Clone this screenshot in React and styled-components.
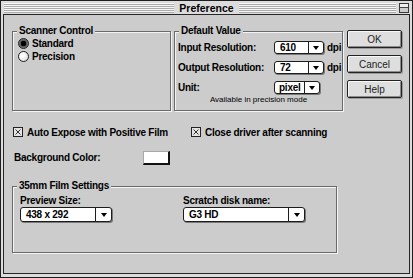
import React from "react"
import styled, { createGlobalStyle } from "styled-components"

const GlobalStyle = createGlobalStyle`
  html, body {
    margin: 0;
    padding: 0;
    background: #ffffff;
  }
  body {
    font-family: "Liberation Sans", Arial, sans-serif;
    color: #000;
  }
`

const Window = styled.div`
  box-sizing: border-box;
  width: 413px;
  height: 278px;
  border: 1px solid #1e1e1e;
  background: #dcdcdc;
  padding: 0 2px 3px 2px;
  display: flex;
  flex-direction: column;
`

const TitleBar = styled.div`
  height: 13px;
  display: grid;
  grid-template-columns: 1fr auto 1fr;
  align-items: center;
`

const Stripes = styled.div`
  height: 10px;
  margin: 0 1px;
  flex: 1;
  background: repeating-linear-gradient(
    to bottom,
    #f6f6f6 0 1px,
    #ababab 1px 2px
  );
`

const TitleSide = styled.div`
  display: flex;
  align-items: center;
`

const Title = styled.div`
  font-weight: 700;
  font-size: 10.5px;
  line-height: 12px;
  padding: 0 4px;
`

const CollapseBox = styled.div`
  box-sizing: border-box;
  width: 10px;
  height: 10px;
  margin: 0 1px 0 2px;
  border: 1px solid #3a3a3a;
  background: linear-gradient(to bottom, #eee 0 3px, #444 3px 4px, #ccc 4px);
`

const Content = styled.div`
  box-sizing: border-box;
  flex: 1;
  border: 1px solid #262626;
  background: #cccccc;
  padding: 16px 0 0 8px;
  display: flex;
  flex-direction: column;
  align-items: flex-start;
  letter-spacing: -0.25px;
`

const TopRow = styled.div`
  display: flex;
  align-items: flex-start;
`

const GroupBox = styled.div`
  box-sizing: border-box;
  width: ${(p) => p.$w}px;
  height: ${(p) => p.$h}px;
  margin-left: ${(p) => p.$ml || 0}px;
  margin-top: ${(p) => p.$mt || 0}px;
  border: 1px solid #6a6a6a;
  box-shadow: 1px 1px 0 #f4f4f4, inset 1px 1px 0 #f4f4f4;
  display: flex;
  flex-direction: column;
  align-items: flex-start;
`

const GroupTitle = styled.div`
  margin: -7px 0 0 4px;
  padding: 0 2px;
  background: #cccccc;
  font-weight: 700;
  font-size: 10px;
  line-height: 12px;
`

const RadioRow = styled.label`
  display: flex;
  align-items: center;
  gap: 3px;
  height: 13px;
  padding-left: 5px;
  font-weight: 700;
  font-size: 10px;
`

const RadioDot = styled.span`
  box-sizing: border-box;
  width: 11px;
  height: 11px;
  border-radius: 50%;
  border: 1px solid #1c1c1c;
  background: ${(p) =>
    p.$on
      ? "radial-gradient(circle, #000 0 2.6px, #555 3px, #888 5px)"
      : "radial-gradient(circle at 35% 35%, #ffffff 0 2px, #e6e6e6 5px)"};
`

const ValueGrid = styled.div`
  display: grid;
  grid-template-columns: 96px auto auto;
  grid-auto-rows: 20px;
  align-items: center;
  padding-left: 3px;
  font-weight: 700;
  font-size: 10px;
`

const Unit = styled.span`
  padding-left: 3px;
`

const Note = styled.div`
  align-self: stretch;
  text-align: center;
  font-size: 8px;
  line-height: 8px;
  margin-top: -1px;
  letter-spacing: 0;
`

const Popup = styled.div`
  box-sizing: border-box;
  display: flex;
  width: ${(p) => p.$w}px;
  height: ${(p) => p.$h || 13}px;
  background: #fff;
  border: 1px solid #1c1c1c;
  border-radius: 3px;
  box-shadow: 1px 1px 0 #7a7a7a;
  font-weight: 700;
  font-size: 10px;
`

const PopupValue = styled.span`
  flex: 1;
  display: flex;
  align-items: center;
  padding-left: ${(p) => p.$pad || 5}px;
  white-space: nowrap;
`

const PopupArrow = styled.span`
  width: ${(p) => p.$w || 14}px;
  flex: none;
  border-left: 1px solid #1c1c1c;
  display: flex;
  align-items: center;
  justify-content: center;

  &::after {
    content: "";
    border-left: 3.5px solid transparent;
    border-right: 3.5px solid transparent;
    border-top: 4px solid #000;
    margin-top: 1px;
  }
`

const ButtonColumn = styled.div`
  display: flex;
  flex-direction: column;
  gap: 7px;
  margin: -1px 0 0 4px;
`

const Button = styled.button`
  box-sizing: border-box;
  width: 55px;
  height: 18px;
  padding: 0;
  border: 1px solid #222;
  border-radius: 2px;
  background: #dedede;
  box-shadow: inset 1px 1px 0 #f8f8f8, inset -1px -1px 0 #8c8c8c,
    1px 1px 0 #9a9a9a;
  font-family: "Liberation Sans", Arial, sans-serif;
  font-size: 10px;
  color: #222;
`

const CheckRow = styled.div`
  display: flex;
  align-items: center;
  height: 14px;
  margin-top: 14px;
`

const CheckItem = styled.label`
  display: flex;
  align-items: center;
  gap: 4px;
  width: ${(p) => (p.$w ? `${p.$w}px` : "auto")};
  padding-left: 1px;
  font-weight: 700;
  font-size: 10px;
`

const CheckBox = styled.svg`
  width: 10px;
  height: 10px;
  display: block;
  flex: none;
`

const ColorRow = styled.div`
  display: flex;
  align-items: center;
  height: 15px;
  margin-top: 11px;
`

const FieldLabel = styled.span`
  width: ${(p) => p.$w}px;
  padding-left: ${(p) => p.$pl || 0}px;
  font-weight: 700;
  font-size: 10px;
`

const Swatch = styled.div`
  box-sizing: border-box;
  width: 27px;
  height: 14px;
  background: #fff;
  border-top: 1px solid #a8a8a8;
  border-left: 1px solid #a8a8a8;
  border-right: 2px solid #111;
  border-bottom: 2px solid #111;
`

const FilmGrid = styled.div`
  display: grid;
  grid-template-columns: 163px auto;
  padding-left: 7px;
  margin-top: 3px;
  font-weight: 700;
  font-size: 10px;
  line-height: 12px;
`

const Check = () => (
  <CheckBox viewBox="0 0 10 10">
    <rect x="0.5" y="0.5" width="9" height="9" fill="#e4e4e4" stroke="#222" />
    <path d="M2.5 2.5 L7.5 7.5 M7.5 2.5 L2.5 7.5" stroke="#333" strokeWidth="1" />
  </CheckBox>
)

const PopupMenu = ({ value, w, h, arrow, pad }) => (
  <Popup $w={w} $h={h}>
    <PopupValue $pad={pad}>{value}</PopupValue>
    <PopupArrow $w={arrow} />
  </Popup>
)

export default function App() {
  return (
    <>
      <GlobalStyle />
      <Window>
        <TitleBar>
          <TitleSide>
            <Stripes />
          </TitleSide>
          <Title>Preference</Title>
          <TitleSide>
            <Stripes />
            <CollapseBox />
          </TitleSide>
        </TitleBar>

        <Content>
          <TopRow>
            <GroupBox $w={159} $h={80}>
              <GroupTitle>Scanner Control</GroupTitle>
              <RadioRow>
                <RadioDot $on />
                Standard
              </RadioRow>
              <RadioRow>
                <RadioDot />
                Precision
              </RadioRow>
            </GroupBox>

            <GroupBox $w={169} $h={80} $ml={3}>
              <GroupTitle>Default Value</GroupTitle>
              <ValueGrid>
                <span>Input Resolution:</span>
                <PopupMenu value="610" w={50} />
                <Unit>dpi</Unit>
                <span>Output Resolution:</span>
                <PopupMenu value="72" w={50} />
                <Unit>dpi</Unit>
                <span>Unit:</span>
                <PopupMenu value="pixel" w={46} pad={4} />
                <span />
              </ValueGrid>
              <Note>Available in precision mode</Note>
            </GroupBox>

            <ButtonColumn>
              <Button>OK</Button>
              <Button>Cancel</Button>
              <Button>Help</Button>
            </ButtonColumn>
          </TopRow>

          <CheckRow>
            <CheckItem $w={177}>
              <Check />
              Auto Expose with Positive Film
            </CheckItem>
            <CheckItem>
              <Check />
              Close driver after scanning
            </CheckItem>
          </CheckRow>

          <ColorRow>
            <FieldLabel $w={129} $pl={2}>Background Color:</FieldLabel>
            <Swatch />
          </ColorRow>

          <GroupBox $w={325} $h={67} $mt={21}>
            <GroupTitle>35mm Film Settings</GroupTitle>
            <FilmGrid>
              <span>Preview Size:</span>
              <span>Scratch disk name:</span>
              <PopupMenu value="438 x 292" w={92} h={15} arrow={15} />
              <PopupMenu value="G3 HD" w={122} h={15} arrow={15} />
            </FilmGrid>
          </GroupBox>
        </Content>
      </Window>
    </>
  )
}
